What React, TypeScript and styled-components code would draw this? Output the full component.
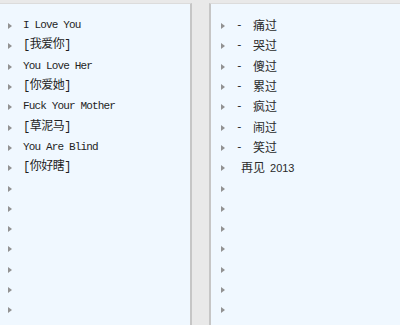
import React from "react";
import styled, { createGlobalStyle } from "styled-components";

const GlobalStyle = createGlobalStyle`
  html, body {
    margin: 0;
    padding: 0;
    background: #e9e9e9;
    overflow: hidden;
  }
`;

const Page = styled.div`
  display: flex;
  gap: 17px;
  width: 400px;
  height: 325px;
  padding-top: 3px;
  box-sizing: border-box;
  overflow: hidden;
`;

const Panel = styled.div<{ $side: "left" | "right" }>`
  flex: 0 0 auto;
  width: ${(p) => (p.$side === "left" ? "192px" : "191px")};
  margin-left: ${(p) => (p.$side === "left" ? "-2px" : "0")};
  height: 340px;
  background: #f0f8ff;
  border-top: 1px solid #dcdcdc;
  ${(p) =>
    p.$side === "left"
      ? "border-right: 2px solid #c6c6c6;"
      : "border-left: 2px solid #c6c6c6;"}
`;

const List = styled.ul`
  list-style: none;
  margin: 0;
  padding: 11px 0 0 10px;
`;

const Row = styled.li`
  display: flex;
  align-items: center;
  height: 20.3px;
`;

const Arrow = styled.span`
  flex: 0 0 auto;
  width: 0;
  height: 0;
  border-top: 3.5px solid transparent;
  border-bottom: 3.5px solid transparent;
  border-left: 4px solid #929292;
  margin-top: 2px;
  margin-right: 11px;
`;

const Label = styled.span<{ $latin?: boolean }>`
  font-family: "Liberation Mono", "Noto Sans CJK SC", monospace;
  font-size: ${(p) => (p.$latin ? "11px" : "12px")};
  letter-spacing: ${(p) => (p.$latin ? "-0.85px" : "-0.5px")};
  color: #1e1e1e;
  white-space: pre;
  line-height: 14px;
`;

const Dash = styled.span`
  display: inline-block;
  width: 17px;
  font-family: "Liberation Mono", monospace;
  font-size: 11px;
  color: #222;
`;

const Plain = styled.span<{ $indent?: number }>`
  font-family: "Noto Sans CJK SC", "Liberation Sans", sans-serif;
  font-size: 12px;
  color: #2a2a2a;
  padding-left: ${(p) => p.$indent ?? 0}px;
  line-height: 14px;
`;

const Year = styled.span`
  font-family: "Liberation Sans", sans-serif;
  font-size: 11px;
  margin-left: 5px;
`;

const leftItems: { text: string; latin: boolean }[] = [
  { text: "I Love You", latin: true },
  { text: "[我爱你]", latin: false },
  { text: "You Love Her", latin: true },
  { text: "[你爱她]", latin: false },
  { text: "Fuck Your Mother", latin: true },
  { text: "[草泥马]", latin: false },
  { text: "You Are Blind", latin: true },
  { text: "[你好瞎]", latin: false },
];

const rightItems = ["痛过", "哭过", "傻过", "累过", "疯过", "闹过", "笑过"];

const TOTAL_ROWS = 15;

export default function App() {
  return (
    <>
      <GlobalStyle />
      <Page>
        <Panel $side="left">
          <List>
            {Array.from({ length: TOTAL_ROWS }).map((_, i) => {
              const item = leftItems[i];
              return (
                <Row key={i}>
                  <Arrow />
                  {item && <Label $latin={item.latin}>{item.text}</Label>}
                </Row>
              );
            })}
          </List>
        </Panel>
        <Panel $side="right">
          <List>
            {Array.from({ length: TOTAL_ROWS }).map((_, i) => {
              const word = rightItems[i];
              return (
                <Row key={i}>
                  <Arrow />
                  {word && (
                    <>
                      <Dash>-</Dash>
                      <Plain>{word}</Plain>
                    </>
                  )}
                  {i === rightItems.length && (
                    <Plain $indent={5}>
                      再见<Year>2013</Year>
                    </Plain>
                  )}
                </Row>
              );
            })}
          </List>
        </Panel>
      </Page>
    </>
  );
}
